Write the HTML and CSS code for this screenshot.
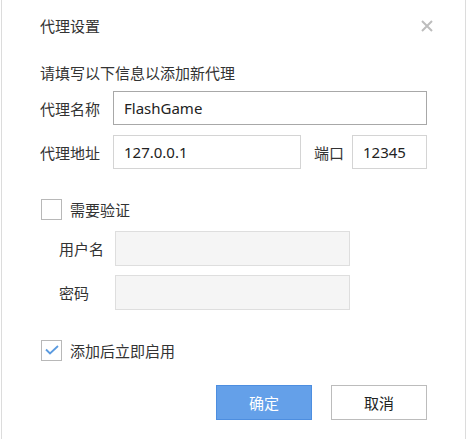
FILE: index.html
```html
<!DOCTYPE html>
<html lang="zh">
<head>
<meta charset="utf-8">
<link rel="stylesheet" href="styles.css">
</head>
<body>
<div class="dialog">
  <div class="header">
    <span class="title">代理设置</span>
    <span class="close"><svg width="12" height="12" viewBox="0 0 12 12"><path d="M1 1L11 11M11 1L1 11" stroke="#bdbdbd" stroke-width="2"/></svg></span>
  </div>
  <div class="intro">请填写以下信息以添加新代理</div>
  <div class="row first">
    <span class="label">代理名称</span>
    <div class="input focus grow">FlashGame</div>
  </div>
  <div class="row">
    <span class="label">代理地址</span>
    <div class="input addr">127.0.0.1</div>
    <span class="label port-label">端口</span>
    <div class="input port">12345</div>
  </div>
  <label class="check auth">
    <span class="box"></span>
    <span class="check-text">需要验证</span>
  </label>
  <div class="sub">
    <div class="row sub-row">
      <span class="label sub-label">用户名</span>
      <div class="input disabled"></div>
    </div>
    <div class="row sub-row">
      <span class="label sub-label">密码</span>
      <div class="input disabled"></div>
    </div>
  </div>
  <label class="check enable">
    <span class="box"><svg width="14" height="10" viewBox="0 0 14 10"><path d="M1 4.5L5 8.5L13 1" fill="none" stroke="#5b9be0" stroke-width="1.8"/></svg></span>
    <span class="check-text">添加后立即启用</span>
  </label>
  <div class="buttons">
    <button class="btn primary">确定</button>
    <button class="btn">取消</button>
  </div>
</div>
</body>
</html>
```

FILE: styles.css
```css
html, body {
  margin: 0;
  padding: 0;
  background: #ffffff;
}
body {
  font-family: "Noto Sans", "Noto Sans CJK SC", sans-serif;
  color: #333333;
}
.dialog {
  box-sizing: border-box;
  margin-left: 1px;
  width: 465px;
  height: 439px;
  border-left: 1px solid #dcdcdc;
  border-right: 1px solid #dcdcdc;
  padding: 0 38px 0 38px;
  display: flex;
  flex-direction: column;
}
.header {
  display: flex;
  align-items: center;
  justify-content: space-between;
  height: 20px;
  margin-top: 16px;
}
.title {
  font-size: 15px;
  line-height: 20px;
  color: #333;
}
.close {
  display: flex;
  margin-right: -6px;
  margin-top: -1px;
}
.intro {
  margin-top: 27px;
  font-size: 15px;
  line-height: 20px;
}
.row {
  display: flex;
  align-items: center;
  height: 34px;
  margin-top: 10px;
}
.row.first {
  margin-top: 8px;
}
.label {
  font-size: 15px;
  width: 73px;
  flex: none;
}
.input {
  box-sizing: border-box;
  height: 34px;
  border: 1px solid #d4d4d4;
  padding: 0 10px;
  font-size: 15px;
  line-height: 32px;
  color: #222;
  background: #fff;
}
.input.focus {
  border-color: #a8a8a8;
}
.grow {
  flex: 1;
}
.addr {
  width: 188px;
}
.port-label {
  width: auto;
  margin-left: 13px;
  margin-right: 8px;
}
.port {
  flex: 1;
}
.check {
  display: flex;
  align-items: center;
  height: 22px;
  margin-left: 1px;
}
.auth {
  margin-top: 29px;
}
.box {
  box-sizing: border-box;
  width: 21px;
  height: 21px;
  border: 1px solid #b8b8b8;
  display: flex;
  align-items: center;
  justify-content: center;
  background: #fff;
}
.check-text {
  font-size: 15px;
  margin-left: 8px;
}
.sub {
  display: flex;
  flex-direction: column;
}
.sub-row:first-child {
  margin-top: 11px;
}
.sub-label {
  padding-left: 19px;
  width: 56px;
}
.input.disabled {
  width: 235px;
  background: #f5f5f5;
  border-color: #dedede;
  height: 35px;
}
.enable {
  margin-top: 30px;
}
.buttons {
  display: flex;
  justify-content: flex-end;
  gap: 19px;
  margin-top: 24px;
}
.btn {
  box-sizing: border-box;
  width: 96px;
  height: 35px;
  border: 1px solid #bcbcbc;
  background: #fff;
  font-family: "Noto Sans", "Noto Sans CJK SC", sans-serif;
  font-size: 15px;
  color: #222;
  padding: 0;
}
.btn.primary {
  background: #64a0e9;
  border-color: #4d8ee0;
  color: #fff;
}
```
